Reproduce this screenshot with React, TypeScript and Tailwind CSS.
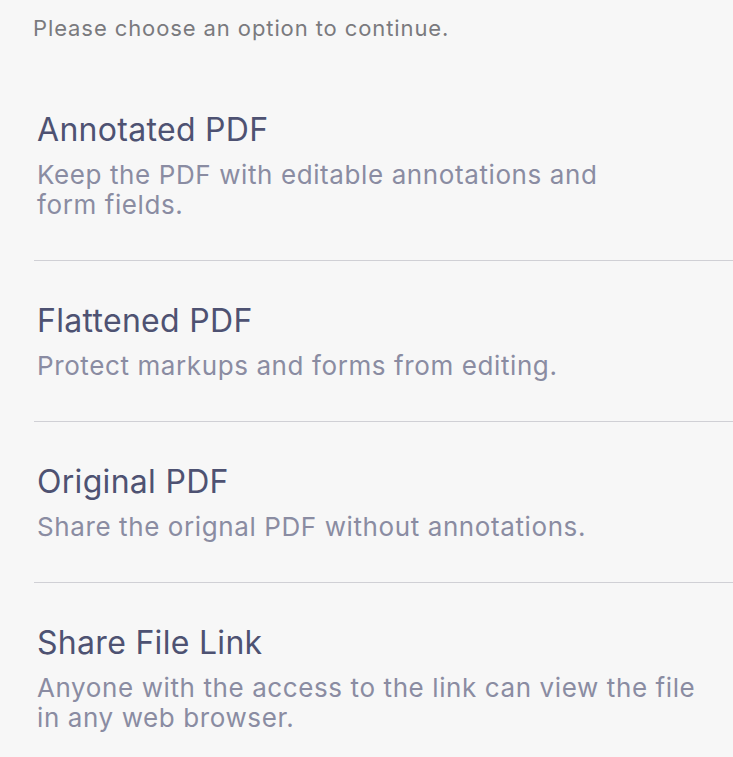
const OPTIONS = [
  {
    title: 'Annotated PDF',
    desc: 'Keep the PDF with editable annotations and form fields.',
    width: 'max-w-[620px]',
  },
  {
    title: 'Flattened PDF',
    desc: 'Protect markups and forms from editing.',
    width: 'max-w-[680px]',
  },
  {
    title: 'Original PDF',
    desc: 'Share the orignal PDF without annotations.',
    width: 'max-w-[680px]',
  },
  {
    title: 'Share File Link',
    desc: 'Anyone with the access to the link can view the file in any web browser.',
    width: 'max-w-[680px]',
  },
];

export default function App() {
  return (
    <div
      className="h-[757px] w-full overflow-hidden bg-[#f7f7f7]"
      style={{ fontFamily: 'Inter, "Noto Sans", sans-serif' }}
    >
      <p className="pl-[33px] pt-[14px] text-[22px] leading-[28px] tracking-[0.9px] text-[#7a7a7e]">
        Please choose an option to continue.
      </p>

      <ul className="ml-[34px] mt-[28px]">
        {OPTIONS.map((opt, i) => (
          <li
            key={opt.title}
            className={`pl-[3px] pt-[40px] pb-[40px] ${
              i < OPTIONS.length - 1 ? 'border-b border-[#d0d0d5]' : ''
            }`}
          >
            <div className="text-[32px] leading-[40px] tracking-[0.3px] text-[#4e5272]">
              {opt.title}
            </div>
            <div
              className={`mt-[10px] text-[26px] leading-[30px] tracking-[0.6px] text-[#8a8ca2] ${opt.width}`}
            >
              {opt.desc}
            </div>
          </li>
        ))}
      </ul>
    </div>
  );
}
